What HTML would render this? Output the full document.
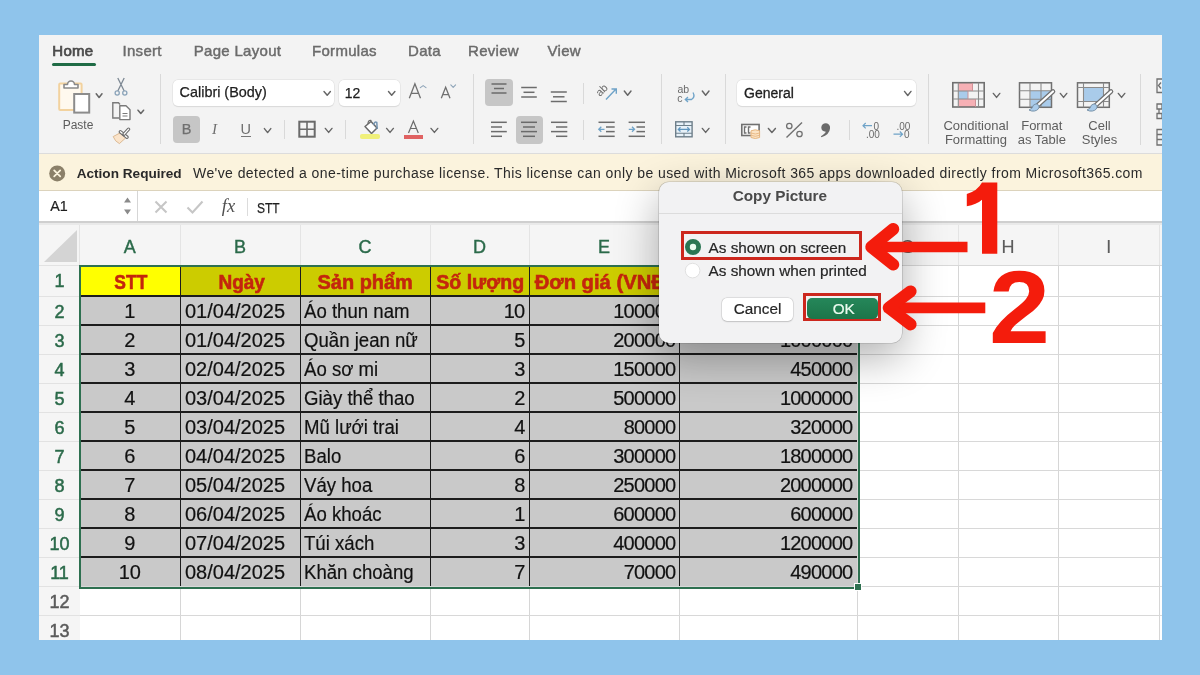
<!DOCTYPE html>
<html><head><meta charset="utf-8">
<style>
html,body{margin:0;padding:0;}
body{width:1200px;height:675px;background:#8FC4EB;position:relative;overflow:hidden;font-family:"Liberation Sans",sans-serif;}
.a{position:absolute;}
#win{position:absolute;left:0;top:0;width:1200px;height:675px;clip-path:inset(35px 38px 35px 39px);will-change:transform;}
.t{position:absolute;white-space:pre;line-height:1;}
.tab{position:absolute;white-space:pre;line-height:1;font-weight:bold;font-size:15px;color:#6A6A6A;top:43px;}
.sep{position:absolute;width:1px;background:#D6D6D6;}
.box{position:absolute;background:#fff;border-radius:5px;box-shadow:0 0 0 0.5px #DEDEDE,0 0.5px 1px rgba(0,0,0,0.12);}
.chev{position:absolute;width:5px;height:5px;border-right:1.6px solid #6A6A6A;border-bottom:1.6px solid #6A6A6A;transform:rotate(45deg);}
.press{position:absolute;background:#C6C6C6;border-radius:4px;}
.cell{position:absolute;font-size:20px;line-height:29px;color:#111;white-space:pre;-webkit-text-stroke:0.2px #111;}
svg{position:absolute;overflow:visible;}
</style></head><body>
<div id="win"><div class="a" style="left:39px;top:35px;width:1123px;height:119px;background:#F3F3F3;"></div>
<div class="a" style="left:39px;top:153px;width:1123px;height:1px;background:#DCDCDC;"></div>
<div class="a" style="left:39px;top:154px;width:1123px;height:37px;background:#FBF3DD;"></div>
<div class="a" style="left:39px;top:190px;width:1123px;height:1px;background:#DCD3BC;"></div>
<div class="a" style="left:39px;top:191px;width:1123px;height:30px;background:#FFFFFF;"></div>
<div class="a" style="left:39px;top:221px;width:1123px;height:2px;background:#CFCFCF;"></div>
<div class="a" style="left:39px;top:223px;width:1123px;height:2px;background:#E9E9E9;"></div>
<div class="t" style="left:52.3px;top:43.00px;font-size:15px;color:#4A4A4A;font-weight:normal;-webkit-text-stroke:0.7px #4A4A4A;letter-spacing:0.3px;">Home</div>
<div class="t" style="left:122.5px;top:43.00px;font-size:15px;color:#6B6B6B;font-weight:normal;-webkit-text-stroke:0.45px #6B6B6B;letter-spacing:0.3px;">Insert</div>
<div class="t" style="left:193.75px;top:43.00px;font-size:15px;color:#6B6B6B;font-weight:normal;-webkit-text-stroke:0.45px #6B6B6B;letter-spacing:0.3px;">Page Layout</div>
<div class="t" style="left:312px;top:43.00px;font-size:15px;color:#6B6B6B;font-weight:normal;-webkit-text-stroke:0.45px #6B6B6B;letter-spacing:0.3px;">Formulas</div>
<div class="t" style="left:408px;top:43.00px;font-size:15px;color:#6B6B6B;font-weight:normal;-webkit-text-stroke:0.45px #6B6B6B;letter-spacing:0.3px;">Data</div>
<div class="t" style="left:468px;top:43.00px;font-size:15px;color:#6B6B6B;font-weight:normal;-webkit-text-stroke:0.45px #6B6B6B;letter-spacing:0.3px;">Review</div>
<div class="t" style="left:547.5px;top:43.00px;font-size:15px;color:#6B6B6B;font-weight:normal;-webkit-text-stroke:0.45px #6B6B6B;letter-spacing:0.3px;">View</div>
<div class="a" style="left:52px;top:63px;width:43.5px;height:3px;background:#1F6B45;border-radius:2px;"></div>
<svg style="left:0;top:0" width="1" height="1"><rect x="59.2" y="83.5" width="22.4" height="26.5" rx="1" fill="#FFF9EE" stroke="#F2D29E" stroke-width="2"/><path d="M64 88 L64 84.5 L67.5 84.5 A3.5 3.5 0 0 1 74.5 84.5 L78 84.5 L78 88 Z" fill="#FFFFFF" stroke="#8A8A8A" stroke-width="1.6" stroke-linejoin="round"/><rect x="74.2" y="94" width="15" height="18.6" fill="#FFFFFF" stroke="#8C8C8C" stroke-width="2"/><path d="M117.8 78 L124.2 91 M124.2 78 L117.8 91" stroke="#7D8893" stroke-width="1.3" fill="none"/><circle cx="117.2" cy="93" r="2.1" fill="none" stroke="#8BA4BA" stroke-width="1.3"/><circle cx="124.8" cy="93" r="2.1" fill="none" stroke="#8BA4BA" stroke-width="1.3"/><path d="M119 118 L112.8 118 L112.8 102.8 L118.5 102.8 L120 104.5" fill="none" stroke="#7A7A7A" stroke-width="1.4"/><path d="M119.8 105.8 L126 105.8 L130 109.8 L130 119.6 L119.8 119.6 Z" fill="#fff" stroke="#7A7A7A" stroke-width="1.4" stroke-linejoin="round"/><path d="M122.5 113.5 L127.5 113.5 M122.5 116 L127.5 116" stroke="#7A7A7A" stroke-width="1"/><path d="M113.2 136.6 L120.6 132.6 L125.8 137.8 L119.4 143.6 Q115 141.5 113.2 136.6 Z" fill="#FBE4CA" stroke="#D8B48C" stroke-width="0.9" stroke-linejoin="round"/><path d="M120.4 131.8 L127 137.2" stroke="#6E6E6E" stroke-width="3.6" stroke-linecap="round"/><path d="M120.4 131.8 L127 137.2" stroke="#FFFFFF" stroke-width="1.3" stroke-linecap="round"/><path d="M123.8 134.4 L128.6 129.2" stroke="#6E6E6E" stroke-width="3.4" stroke-linecap="round"/><path d="M124.2 134 L128.6 129.2" stroke="#FFFFFF" stroke-width="1.2" stroke-linecap="round"/></svg>
<svg style="left:0;top:0" width="1" height="1"><polyline points="96.2,93.8 99.1,97.4 102,93.8" fill="none" stroke="#666" stroke-width="1.53" stroke-linecap="round" stroke-linejoin="round"/></svg>
<svg style="left:0;top:0" width="1" height="1"><polyline points="138,110.2 140.8,113.5 143.6,110.2" fill="none" stroke="#666" stroke-width="1.53" stroke-linecap="round" stroke-linejoin="round"/></svg>
<div class="t" style="left:62.7px;top:119.04px;font-size:12px;color:#5C5C5C;font-weight:normal;">Paste</div>
<div class="a" style="left:159.5px;top:74px;width:1.0px;height:70px;background:#D9D9D9;"></div>
<div class="box" style="left:173px;top:80px;width:161px;height:26px;"></div>
<div class="t" style="left:179.6px;top:85.01px;font-size:14.4px;color:#1E1E1E;font-weight:normal;-webkit-text-stroke:0.25px #1E1E1E;">Calibri (Body)</div>
<svg style="left:0;top:0" width="1" height="1"><polyline points="324,91.5 327.2,95.2 330.4,91.5" fill="none" stroke="#666" stroke-width="1.4449999999999998" stroke-linecap="round" stroke-linejoin="round"/></svg>
<div class="box" style="left:339px;top:80px;width:61px;height:26px;"></div>
<div class="t" style="left:344.7px;top:85.85px;font-size:14px;color:#1E1E1E;font-weight:normal;-webkit-text-stroke:0.25px #1E1E1E;">12</div>
<svg style="left:0;top:0" width="1" height="1"><polyline points="388.5,91.5 391.7,95.2 394.9,91.5" fill="none" stroke="#666" stroke-width="1.4449999999999998" stroke-linecap="round" stroke-linejoin="round"/></svg>
<svg style="left:0;top:0" width="1" height="1"><path d="M409.3 98.3 L414.9 83.8 L420.5 98.3 M411.4 93.4 H418.4 M441.3 98.3 L445.65 87.2 L450 98.3 M442.9 94.6 H448.4" fill="none" stroke="#707070" stroke-width="1.3"/></svg>
<svg style="left:0;top:0" width="1" height="1"><polyline points="420.3,87.6 423.15,85.6 426,87.6" fill="none" stroke="#8EA4B8" stroke-width="1.105" stroke-linecap="round" stroke-linejoin="round"/></svg>
<svg style="left:0;top:0" width="1" height="1"><polyline points="450.8,84.9 453.20000000000005,87.4 455.6,84.9" fill="none" stroke="#8EA4B8" stroke-width="1.105" stroke-linecap="round" stroke-linejoin="round"/></svg>
<div class="press" style="left:172.5px;top:116px;width:27px;height:27px;"></div>
<div class="t" style="left:181.8px;top:122.03px;font-size:14.5px;color:#707070;font-weight:normal;-webkit-text-stroke:0.25px #707070;">B</div>
<div class="t" style="left:212px;top:121.60px;font-size:15px;color:#6E6E6E;font-weight:normal;font-style:italic;font-family:'Liberation Serif',serif;">I</div>
<div class="t" style="left:240.5px;top:122.03px;font-size:14.5px;color:#6E6E6E;font-weight:normal;">U</div>
<div class="a" style="left:240.6px;top:136px;width:10.099999999999994px;height:1.4000000000000057px;background:#777;"></div>
<svg style="left:0;top:0" width="1" height="1"><polyline points="264.4,128.6 267.6,132.6 270.8,128.6" fill="none" stroke="#666" stroke-width="1.4449999999999998" stroke-linecap="round" stroke-linejoin="round"/></svg>
<div class="a" style="left:283.5px;top:120px;width:1.0px;height:19px;background:#D9D9D9;"></div>
<svg style="left:0;top:0" width="1" height="1"><rect x="299.3" y="121.7" width="15.4" height="15" fill="none" stroke="#6A6A6A" stroke-width="2"/><path d="M307 121.7 V136.7 M299.3 129.2 H314.7" stroke="#6A6A6A" stroke-width="1.6"/><path d="M365 126.5 L371 121.5 L377 128 L371.5 133.5 Z" fill="#fff" stroke="#6A6A6A" stroke-width="1.5" stroke-linejoin="round"/><path d="M368 124 Q368 119.5 371.5 120.5" fill="none" stroke="#6A6A6A" stroke-width="1.3"/><path d="M373.5 125 Q374.5 121 376.8 122.5 L377.2 129" fill="none" stroke="#7393B0" stroke-width="1.5"/><path d="M408.5 133 L413.4 121 L418.3 133 M410.3 128.5 H416.5" fill="none" stroke="#6A6A6A" stroke-width="1.2"/></svg>
<div class="a" style="left:359.5px;top:134.3px;width:20.0px;height:5.0px;background:#F0F07A;border-radius:2px;filter:blur(0.6px);"></div>
<div class="a" style="left:404px;top:134.7px;width:18.69999999999999px;height:4.200000000000017px;background:#E06262;"></div>
<svg style="left:0;top:0" width="1" height="1"><polyline points="325.3,128.4 328.65,132.4 332,128.4" fill="none" stroke="#666" stroke-width="1.4449999999999998" stroke-linecap="round" stroke-linejoin="round"/></svg>
<svg style="left:0;top:0" width="1" height="1"><polyline points="386.6,128.4 390.0,132.4 393.4,128.4" fill="none" stroke="#666" stroke-width="1.4449999999999998" stroke-linecap="round" stroke-linejoin="round"/></svg>
<svg style="left:0;top:0" width="1" height="1"><polyline points="431,128.4 434.4,132.4 437.8,128.4" fill="none" stroke="#666" stroke-width="1.4449999999999998" stroke-linecap="round" stroke-linejoin="round"/></svg>
<div class="a" style="left:345.1px;top:120px;width:1.0px;height:19.30000000000001px;background:#D9D9D9;"></div>
<div class="a" style="left:472.8px;top:74px;width:1.0px;height:70px;background:#D9D9D9;"></div>
<div class="press" style="left:485px;top:79px;width:28px;height:27.4px;"></div>
<div class="press" style="left:515.5px;top:116px;width:27.2px;height:27.6px;"></div>
<svg style="left:0;top:0" width="1" height="1"><path d="M491.5 84 H506.5" stroke="#6A6A6A" stroke-width="1.5"/><path d="M494 88.5 H504" stroke="#6A6A6A" stroke-width="1.5"/><path d="M491.5 93 H506.5" stroke="#6A6A6A" stroke-width="1.5"/><path d="M521.2 87.5 H536.8" stroke="#6C6C6C" stroke-width="1.5"/><path d="M523.5 92.3 H534.5" stroke="#6C6C6C" stroke-width="1.5"/><path d="M521.2 97 H536.8" stroke="#6C6C6C" stroke-width="1.5"/><path d="M550.8 92 H566.8" stroke="#6C6C6C" stroke-width="1.5"/><path d="M553 96.8 H564.5" stroke="#6C6C6C" stroke-width="1.5"/><path d="M550.8 101.5 H566.8" stroke="#6C6C6C" stroke-width="1.5"/><path d="M491 122.3 H506.8" stroke="#6C6C6C" stroke-width="1.5"/><path d="M491 127 H502" stroke="#6C6C6C" stroke-width="1.5"/><path d="M491 131.6 H506.8" stroke="#6C6C6C" stroke-width="1.5"/><path d="M491 136.3 H502" stroke="#6C6C6C" stroke-width="1.5"/><path d="M521 122.3 H537" stroke="#6A6A6A" stroke-width="1.5"/><path d="M523 127 H535" stroke="#6A6A6A" stroke-width="1.5"/><path d="M521 131.6 H537" stroke="#6A6A6A" stroke-width="1.5"/><path d="M523 136.3 H535" stroke="#6A6A6A" stroke-width="1.5"/><path d="M551 122.3 H567.3" stroke="#6C6C6C" stroke-width="1.5"/><path d="M556 127 H567.3" stroke="#6C6C6C" stroke-width="1.5"/><path d="M551 131.6 H567.3" stroke="#6C6C6C" stroke-width="1.5"/><path d="M556 136.3 H567.3" stroke="#6C6C6C" stroke-width="1.5"/><text x="0" y="0" transform="translate(600,97) rotate(-45)" font-family="Liberation Sans" font-size="11" fill="#6A6A6A">ab</text><path d="M606 99.5 L616 89 M611.5 89 H616.3 V93.8" fill="none" stroke="#6FA3C8" stroke-width="1.4"/><text x="677.5" y="92.5" font-family="Liberation Sans" font-size="10.5" fill="#6A6A6A">ab</text><text x="677.3" y="101.5" font-family="Liberation Sans" font-size="10.5" fill="#6A6A6A">c</text><path d="M693 92.5 Q695.5 97 691.5 99.5 L685.5 99.5 M688 97 L685.3 99.5 L688 102" fill="none" stroke="#6FA3C8" stroke-width="1.3"/><path d="M598.5 122.3 H614.7" stroke="#6C6C6C" stroke-width="1.5"/><path d="M606 127 H614.7" stroke="#6C6C6C" stroke-width="1.5"/><path d="M606 131.6 H614.7" stroke="#6C6C6C" stroke-width="1.5"/><path d="M598.5 136.3 H614.7" stroke="#6C6C6C" stroke-width="1.5"/><path d="M604.5 129.3 H598.8 M601.3 126.8 L598.8 129.3 L601.3 131.8" fill="none" stroke="#6FA3C8" stroke-width="1.3"/><path d="M628.6 122.3 H645" stroke="#6C6C6C" stroke-width="1.5"/><path d="M636.5 127 H645" stroke="#6C6C6C" stroke-width="1.5"/><path d="M636.5 131.6 H645" stroke="#6C6C6C" stroke-width="1.5"/><path d="M628.6 136.3 H645" stroke="#6C6C6C" stroke-width="1.5"/><path d="M628.8 129.3 H634.5 M632 126.8 L634.5 129.3 L632 131.8" fill="none" stroke="#6FA3C8" stroke-width="1.3"/><rect x="675.7" y="121.8" width="16.4" height="15" fill="#E7F1F8" stroke="#6E7F8A" stroke-width="1.4"/><path d="M675.7 125.5 H692.1 M675.7 133.3 H692.1 M684 121.8 V125.5 M684 133.3 V136.8" stroke="#6E7F8A" stroke-width="1.1"/><path d="M678.3 129.4 H689.5 M680.5 127.3 L678.3 129.4 L680.5 131.5 M687.3 127.3 L689.5 129.4 L687.3 131.5" fill="none" stroke="#5E95BE" stroke-width="1.2"/></svg>
<div class="a" style="left:582.5px;top:83px;width:1.0px;height:21px;background:#D9D9D9;"></div>
<div class="a" style="left:582.5px;top:120px;width:1.0px;height:20px;background:#D9D9D9;"></div>
<svg style="left:0;top:0" width="1" height="1"><polyline points="624.3,91 627.65,95.2 631,91" fill="none" stroke="#666" stroke-width="1.4449999999999998" stroke-linecap="round" stroke-linejoin="round"/></svg>
<svg style="left:0;top:0" width="1" height="1"><polyline points="702.3,91 705.65,95.2 709,91" fill="none" stroke="#666" stroke-width="1.4449999999999998" stroke-linecap="round" stroke-linejoin="round"/></svg>
<svg style="left:0;top:0" width="1" height="1"><polyline points="702.3,128.4 705.65,132.4 709,128.4" fill="none" stroke="#666" stroke-width="1.4449999999999998" stroke-linecap="round" stroke-linejoin="round"/></svg>
<div class="a" style="left:660.5px;top:74px;width:1.0px;height:70px;background:#D9D9D9;"></div>
<div class="a" style="left:724.5px;top:74px;width:1.0px;height:70px;background:#D9D9D9;"></div>
<div class="box" style="left:737.3px;top:80px;width:178.5px;height:26.3px;"></div>
<div class="t" style="left:744px;top:86.15px;font-size:14px;color:#1E1E1E;font-weight:normal;-webkit-text-stroke:0.3px #1E1E1E;">General</div>
<svg style="left:0;top:0" width="1" height="1"><polyline points="904.5,91.4 907.75,95.5 911,91.4" fill="none" stroke="#666" stroke-width="1.4449999999999998" stroke-linecap="round" stroke-linejoin="round"/></svg>
<svg style="left:0;top:0" width="1" height="1"><rect x="741.8" y="124.5" width="17.3" height="11" fill="#fff" stroke="#707070" stroke-width="1.6"/><path d="M746.5 127 H744.5 V133 H746.5 M750.5 127 H748.5 V133 H750.5" fill="none" stroke="#707070" stroke-width="1.4"/><path d="M751 130.8 Q755.3 128.8 759.6 130.8 V137.5 Q755.3 139.5 751 137.5 Z" fill="#FBE3C4" stroke="#E6B680" stroke-width="1"/><path d="M751 133 Q755.3 135 759.6 133 M751 135.3 Q755.3 137.3 759.6 135.3" fill="none" stroke="#E6B680" stroke-width="0.9"/><path d="M786.5 137.5 L802 122.5" stroke="#707070" stroke-width="1.4"/><circle cx="789.3" cy="126" r="2.7" fill="none" stroke="#707070" stroke-width="1.3"/><circle cx="799.5" cy="134" r="2.7" fill="none" stroke="#707070" stroke-width="1.3"/><path d="M821.3 127.6 A4.4 4.4 0 1 1 830 128.5 Q829.6 134.6 821.4 137.3 L820.9 136.2 Q825.2 133.6 825.8 131.7 Q821.3 131.5 821.3 127.6 Z" fill="#6A6A6A"/><text x="873.5" y="129.6" font-family="Liberation Sans" font-size="10" fill="#6A6A6A">0</text><text x="866" y="138" font-family="Liberation Sans" font-size="10" fill="#6A6A6A">.00</text><path d="M872 125.7 H863 M865.7 123 L863 125.7 L865.7 128.4" fill="none" stroke="#6FA3C8" stroke-width="1.2"/><text x="896.5" y="129.6" font-family="Liberation Sans" font-size="10" fill="#6A6A6A">.00</text><text x="904" y="138" font-family="Liberation Sans" font-size="10" fill="#6A6A6A">0</text><path d="M893.5 134.2 H902.5 M899.8 131.5 L902.5 134.2 L899.8 136.9" fill="none" stroke="#6FA3C8" stroke-width="1.2"/></svg>
<svg style="left:0;top:0" width="1" height="1"><polyline points="768.4,128.4 771.9,132.4 775.4,128.4" fill="none" stroke="#666" stroke-width="1.4449999999999998" stroke-linecap="round" stroke-linejoin="round"/></svg>
<div class="a" style="left:848.5px;top:120px;width:1.0px;height:20px;background:#D9D9D9;"></div>
<div class="a" style="left:927.5px;top:74px;width:1.0px;height:70px;background:#D9D9D9;"></div>
<svg style="left:0;top:0" width="1" height="1"><rect x="958.5" y="83" width="14" height="8" fill="#F6B0B5"/><rect x="958.5" y="91" width="9.5" height="8" fill="#A9CBEA"/><rect x="958.5" y="99" width="17" height="8" fill="#F6B0B5"/><rect x="952.8" y="82.7" width="31.40000000000009" height="24.299999999999997" fill="none" stroke="#707070" stroke-width="1.6"/><path d="M958.3 82.7 V107 M978.5 82.7 V107 M952.8 91 H984.2 M952.8 99 H984.2" stroke="#8A8A8A" stroke-width="1.1"/><path d="M972.5 83 V91 M968 91 V99 M975.5 99 V107" stroke="#C98A90" stroke-width="0.9"/><rect x="1030.5" y="91" width="21" height="16.3" fill="#A9CBEA"/><rect x="1019.5" y="82.8" width="32.0" height="24.5" fill="none" stroke="#707070" stroke-width="1.5"/><path d="M1030 82.8 V107.3 M1041 82.8 V107.3 M1019.5 90.8 H1051.5 M1019.5 99.2 H1051.5" stroke="#8A8A8A" stroke-width="1.1"/><path d="M1053 91.5 L1037.5 105.5" stroke="#707070" stroke-width="4.6" stroke-linecap="round"/><path d="M1053 91.5 L1037.5 105.5" stroke="#FFFFFF" stroke-width="2.2" stroke-linecap="round"/><path d="M1029.0 110.0 Q1032.5 109.0 1033.5 105.0 Q1036.0 102.5 1039.0 105.5 Q1039.5 110.0 1034.5 111.0 Q1031.5 111.5 1029.0 110.0 Z" fill="#A9CBEA" stroke="#7A94AA" stroke-width="1"/><rect x="1083.8" y="87.8" width="19.5" height="13.5" fill="#A9CBEA"/><rect x="1077.5" y="82.8" width="31.799999999999955" height="24.5" fill="none" stroke="#707070" stroke-width="1.5"/><path d="M1083.5 82.8 V107.3 M1103.5 82.8 V107.3 M1077.5 87.5 H1109.3 M1077.5 101.5 H1109.3" stroke="#8A8A8A" stroke-width="1.1"/><path d="M1111 91.5 L1095.5 105.5" stroke="#707070" stroke-width="4.6" stroke-linecap="round"/><path d="M1111 91.5 L1095.5 105.5" stroke="#FFFFFF" stroke-width="2.2" stroke-linecap="round"/><path d="M1087.0 110.0 Q1090.5 109.0 1091.5 105.0 Q1094.0 102.5 1097.0 105.5 Q1097.5 110.0 1092.5 111.0 Q1089.5 111.5 1087.0 110.0 Z" fill="#A9CBEA" stroke="#7A94AA" stroke-width="1"/><path d="M1162 79 H1157 V92.5 H1162 M1161 82.5 L1158.5 85.5 L1161 88.5 M1157 104 H1162 V109 H1157 Z M1157 113.5 H1162 V118.5 H1157 Z M1159 109 V113.5 M1162 129.5 H1157 V145 H1162 M1157 134.5 H1162 M1157 139.5 H1162" fill="none" stroke="#707070" stroke-width="1.3"/></svg>
<svg style="left:0;top:0" width="1" height="1"><polyline points="993.3,93.4 996.55,97.4 999.8,93.4" fill="none" stroke="#666" stroke-width="1.4449999999999998" stroke-linecap="round" stroke-linejoin="round"/></svg>
<svg style="left:0;top:0" width="1" height="1"><polyline points="1060.3,93.4 1063.55,97.4 1066.8,93.4" fill="none" stroke="#666" stroke-width="1.4449999999999998" stroke-linecap="round" stroke-linejoin="round"/></svg>
<svg style="left:0;top:0" width="1" height="1"><polyline points="1118.3,93.4 1121.55,97.4 1124.8,93.4" fill="none" stroke="#666" stroke-width="1.4449999999999998" stroke-linecap="round" stroke-linejoin="round"/></svg>
<div class="t" style="left:916px;width:120px;text-align:center;top:119.00px;font-size:13px;color:#5E5E5E;">Conditional</div>
<div class="t" style="left:916px;width:120px;text-align:center;top:133.00px;font-size:13px;color:#5E5E5E;">Formatting</div>
<div class="t" style="left:981.8px;width:120px;text-align:center;top:119.00px;font-size:13px;color:#5E5E5E;">Format</div>
<div class="t" style="left:981.8px;width:120px;text-align:center;top:133.00px;font-size:13px;color:#5E5E5E;">as Table</div>
<div class="t" style="left:1039.5px;width:120px;text-align:center;top:119.00px;font-size:13px;color:#5E5E5E;">Cell</div>
<div class="t" style="left:1039.5px;width:120px;text-align:center;top:133.00px;font-size:13px;color:#5E5E5E;">Styles</div>
<div class="a" style="left:1140.0px;top:74px;width:1.0px;height:71px;background:#D9D9D9;"></div>
<svg style="left:0;top:0" width="1" height="1"><circle cx="57.2" cy="173.4" r="8" fill="#8B8069"/><path d="M54.2 170.4 L60.2 176.4 M60.2 170.4 L54.2 176.4" stroke="#FBF3DD" stroke-width="1.8" stroke-linecap="round"/></svg>
<div class="t" style="left:76.7px;top:166.79px;font-size:13.6px;color:#2A2A2A;font-weight:bold;">Action Required</div>
<div class="t" style="left:193px;top:166.45px;font-size:14px;color:#2A2A2A;font-weight:normal;letter-spacing:0.425px;">We've detected a one-time purchase license. This license can only be used with Microsoft 365 apps downloaded directly from Microsoft365.com</div>
<div class="a" style="left:137px;top:191px;width:1px;height:30px;background:#D6D6D6;"></div>
<div class="t" style="left:50.2px;top:198.60px;font-size:14.3px;color:#1E1E1E;font-weight:normal;-webkit-text-stroke:0.2px #1E1E1E;">A1</div>
<svg style="left:0;top:0" width="1" height="1"><path d="M124 202.5 L127.5 197.5 L131 202.5 Z M124 209.5 L127.5 214.5 L131 209.5 Z" fill="#8A8A8A"/><path d="M155.5 201.5 L166.5 212.5 M166.5 201.5 L155.5 212.5" stroke="#C6C6C6" stroke-width="2.1"/><path d="M187.5 207.5 L192.5 212.5 L202.5 201.5" fill="none" stroke="#C6C6C6" stroke-width="2.1"/></svg>
<div class="t" style="left:221.8px;top:197.14px;font-size:18.5px;color:#505050;font-weight:normal;font-family:'Liberation Serif',serif;font-style:italic;">fx</div>
<div class="a" style="left:247px;top:198px;width:1px;height:18px;background:#DCDCDC;"></div>
<div class="t" style="left:256.5px;top:199.50px;font-size:15px;color:#1E1E1E;font-weight:normal;transform:scaleX(0.8);transform-origin:0 0;-webkit-text-stroke:0.25px #1E1E1E;">STT</div>
<div class="a" style="left:39px;top:225px;width:1123px;height:41px;background:#F5F5F5;"></div>
<div class="a" style="left:39px;top:266px;width:41px;height:380px;background:#F5F5F5;"></div>
<div class="a" style="left:80px;top:266px;width:1082px;height:380px;background:#FFFFFF;"></div>
<svg style="left:0;top:0" width="1200" height="675"><polygon points="44,262 77,262 77,230" fill="#D4D4D4"/></svg>
<div class="a" style="left:79.0px;top:225px;width:1px;height:41px;background:#E4E4E4;"></div>
<div class="a" style="left:179.5px;top:225px;width:1px;height:41px;background:#E4E4E4;"></div>
<div class="a" style="left:299.5px;top:225px;width:1px;height:41px;background:#E4E4E4;"></div>
<div class="a" style="left:429.5px;top:225px;width:1px;height:41px;background:#E4E4E4;"></div>
<div class="a" style="left:528.5px;top:225px;width:1px;height:41px;background:#E4E4E4;"></div>
<div class="a" style="left:678.5px;top:225px;width:1px;height:41px;background:#E4E4E4;"></div>
<div class="a" style="left:856.5px;top:225px;width:1px;height:41px;background:#E4E4E4;"></div>
<div class="a" style="left:957.5px;top:225px;width:1px;height:41px;background:#E4E4E4;"></div>
<div class="a" style="left:1057.5px;top:225px;width:1px;height:41px;background:#E4E4E4;"></div>
<div class="a" style="left:1159.0px;top:225px;width:1px;height:41px;background:#E4E4E4;"></div>
<div class="a" style="left:179.5px;top:266px;width:1px;height:380px;background:#D6D6D6;"></div>
<div class="a" style="left:299.5px;top:266px;width:1px;height:380px;background:#D6D6D6;"></div>
<div class="a" style="left:429.5px;top:266px;width:1px;height:380px;background:#D6D6D6;"></div>
<div class="a" style="left:528.5px;top:266px;width:1px;height:380px;background:#D6D6D6;"></div>
<div class="a" style="left:678.5px;top:266px;width:1px;height:380px;background:#D6D6D6;"></div>
<div class="a" style="left:856.5px;top:266px;width:1px;height:380px;background:#D6D6D6;"></div>
<div class="a" style="left:957.5px;top:266px;width:1px;height:380px;background:#D6D6D6;"></div>
<div class="a" style="left:1057.5px;top:266px;width:1px;height:380px;background:#D6D6D6;"></div>
<div class="a" style="left:1159.0px;top:266px;width:1px;height:380px;background:#D6D6D6;"></div>
<div class="a" style="left:39px;top:264.5px;width:41px;height:1px;background:#E2E2E2;"></div>
<div class="a" style="left:80px;top:264.5px;width:1082px;height:1px;background:#D8D8D8;"></div>
<div class="a" style="left:39px;top:295.5px;width:41px;height:1px;background:#E2E2E2;"></div>
<div class="a" style="left:80px;top:295.5px;width:1082px;height:1px;background:#D8D8D8;"></div>
<div class="a" style="left:39px;top:324.5px;width:41px;height:1px;background:#E2E2E2;"></div>
<div class="a" style="left:80px;top:324.5px;width:1082px;height:1px;background:#D8D8D8;"></div>
<div class="a" style="left:39px;top:353.5px;width:41px;height:1px;background:#E2E2E2;"></div>
<div class="a" style="left:80px;top:353.5px;width:1082px;height:1px;background:#D8D8D8;"></div>
<div class="a" style="left:39px;top:382.5px;width:41px;height:1px;background:#E2E2E2;"></div>
<div class="a" style="left:80px;top:382.5px;width:1082px;height:1px;background:#D8D8D8;"></div>
<div class="a" style="left:39px;top:411.5px;width:41px;height:1px;background:#E2E2E2;"></div>
<div class="a" style="left:80px;top:411.5px;width:1082px;height:1px;background:#D8D8D8;"></div>
<div class="a" style="left:39px;top:440.5px;width:41px;height:1px;background:#E2E2E2;"></div>
<div class="a" style="left:80px;top:440.5px;width:1082px;height:1px;background:#D8D8D8;"></div>
<div class="a" style="left:39px;top:469.5px;width:41px;height:1px;background:#E2E2E2;"></div>
<div class="a" style="left:80px;top:469.5px;width:1082px;height:1px;background:#D8D8D8;"></div>
<div class="a" style="left:39px;top:498.5px;width:41px;height:1px;background:#E2E2E2;"></div>
<div class="a" style="left:80px;top:498.5px;width:1082px;height:1px;background:#D8D8D8;"></div>
<div class="a" style="left:39px;top:527.5px;width:41px;height:1px;background:#E2E2E2;"></div>
<div class="a" style="left:80px;top:527.5px;width:1082px;height:1px;background:#D8D8D8;"></div>
<div class="a" style="left:39px;top:556.5px;width:41px;height:1px;background:#E2E2E2;"></div>
<div class="a" style="left:80px;top:556.5px;width:1082px;height:1px;background:#D8D8D8;"></div>
<div class="a" style="left:39px;top:585.5px;width:41px;height:1px;background:#E2E2E2;"></div>
<div class="a" style="left:80px;top:585.5px;width:1082px;height:1px;background:#D8D8D8;"></div>
<div class="a" style="left:39px;top:614.5px;width:41px;height:1px;background:#E2E2E2;"></div>
<div class="a" style="left:80px;top:614.5px;width:1082px;height:1px;background:#D8D8D8;"></div>
<div class="a" style="left:39px;top:643.5px;width:41px;height:1px;background:#E2E2E2;"></div>
<div class="a" style="left:80px;top:643.5px;width:1082px;height:1px;background:#D8D8D8;"></div>
<div class="t" style="left:79.75px;width:100px;text-align:center;top:238px;font-size:18px;color:#2B6A4A;-webkit-text-stroke:0.4px #2B6A4A;">A</div>
<div class="t" style="left:190.0px;width:100px;text-align:center;top:238px;font-size:18px;color:#2B6A4A;-webkit-text-stroke:0.4px #2B6A4A;">B</div>
<div class="t" style="left:315.0px;width:100px;text-align:center;top:238px;font-size:18px;color:#2B6A4A;-webkit-text-stroke:0.4px #2B6A4A;">C</div>
<div class="t" style="left:429.5px;width:100px;text-align:center;top:238px;font-size:18px;color:#2B6A4A;-webkit-text-stroke:0.4px #2B6A4A;">D</div>
<div class="t" style="left:554.0px;width:100px;text-align:center;top:238px;font-size:18px;color:#2B6A4A;-webkit-text-stroke:0.4px #2B6A4A;">E</div>
<div class="t" style="left:718.0px;width:100px;text-align:center;top:238px;font-size:18px;color:#2B6A4A;-webkit-text-stroke:0.4px #2B6A4A;">F</div>
<div class="t" style="left:857.5px;width:100px;text-align:center;top:238px;font-size:18px;color:#5C5C5C;-webkit-text-stroke:0.1px #5C5C5C;">G</div>
<div class="t" style="left:958.0px;width:100px;text-align:center;top:238px;font-size:18px;color:#5C5C5C;-webkit-text-stroke:0.1px #5C5C5C;">H</div>
<div class="t" style="left:1058.75px;width:100px;text-align:center;top:238px;font-size:18px;color:#5C5C5C;-webkit-text-stroke:0.1px #5C5C5C;">I</div>
<div class="t" style="left:39px;width:41px;text-align:center;top:272.2px;font-size:18px;color:#2B6A4A;-webkit-text-stroke:0.5px #2B6A4A;">1</div>
<div class="t" style="left:39px;width:41px;text-align:center;top:303.2px;font-size:18px;color:#2B6A4A;-webkit-text-stroke:0.5px #2B6A4A;">2</div>
<div class="t" style="left:39px;width:41px;text-align:center;top:332.2px;font-size:18px;color:#2B6A4A;-webkit-text-stroke:0.5px #2B6A4A;">3</div>
<div class="t" style="left:39px;width:41px;text-align:center;top:361.2px;font-size:18px;color:#2B6A4A;-webkit-text-stroke:0.5px #2B6A4A;">4</div>
<div class="t" style="left:39px;width:41px;text-align:center;top:390.2px;font-size:18px;color:#2B6A4A;-webkit-text-stroke:0.5px #2B6A4A;">5</div>
<div class="t" style="left:39px;width:41px;text-align:center;top:419.2px;font-size:18px;color:#2B6A4A;-webkit-text-stroke:0.5px #2B6A4A;">6</div>
<div class="t" style="left:39px;width:41px;text-align:center;top:448.2px;font-size:18px;color:#2B6A4A;-webkit-text-stroke:0.5px #2B6A4A;">7</div>
<div class="t" style="left:39px;width:41px;text-align:center;top:477.2px;font-size:18px;color:#2B6A4A;-webkit-text-stroke:0.5px #2B6A4A;">8</div>
<div class="t" style="left:39px;width:41px;text-align:center;top:506.2px;font-size:18px;color:#2B6A4A;-webkit-text-stroke:0.5px #2B6A4A;">9</div>
<div class="t" style="left:39px;width:41px;text-align:center;top:535.2px;font-size:18px;color:#2B6A4A;-webkit-text-stroke:0.5px #2B6A4A;">10</div>
<div class="t" style="left:39px;width:41px;text-align:center;top:564.2px;font-size:18px;color:#2B6A4A;-webkit-text-stroke:0.5px #2B6A4A;">11</div>
<div class="t" style="left:39px;width:41px;text-align:center;top:593.2px;font-size:18px;color:#5A5A5A;-webkit-text-stroke:0.5px #5A5A5A;">12</div>
<div class="t" style="left:39px;width:41px;text-align:center;top:622.2px;font-size:18px;color:#5A5A5A;-webkit-text-stroke:0.5px #5A5A5A;">13</div>
<div class="a" style="left:80px;top:266px;width:777px;height:320px;background:#C9C9C9;"></div>
<div class="a" style="left:80px;top:266px;width:100px;height:30px;background:#FFFF00;"></div>
<div class="a" style="left:180px;top:266px;width:677px;height:30px;background:#CCCC00;"></div>
<div class="a" style="left:80px;top:295.4px;width:777px;height:1.3px;background:#1C1C1C;"></div>
<div class="a" style="left:80px;top:324.4px;width:777px;height:1.3px;background:#1C1C1C;"></div>
<div class="a" style="left:80px;top:353.4px;width:777px;height:1.3px;background:#1C1C1C;"></div>
<div class="a" style="left:80px;top:382.4px;width:777px;height:1.3px;background:#1C1C1C;"></div>
<div class="a" style="left:80px;top:411.4px;width:777px;height:1.3px;background:#1C1C1C;"></div>
<div class="a" style="left:80px;top:440.4px;width:777px;height:1.3px;background:#1C1C1C;"></div>
<div class="a" style="left:80px;top:469.4px;width:777px;height:1.3px;background:#1C1C1C;"></div>
<div class="a" style="left:80px;top:498.4px;width:777px;height:1.3px;background:#1C1C1C;"></div>
<div class="a" style="left:80px;top:527.4px;width:777px;height:1.3px;background:#1C1C1C;"></div>
<div class="a" style="left:80px;top:556.4px;width:777px;height:1.3px;background:#1C1C1C;"></div>
<div class="a" style="left:179.85px;top:266px;width:1.3px;height:320px;background:#1C1C1C;"></div>
<div class="a" style="left:299.85px;top:266px;width:1.3px;height:320px;background:#1C1C1C;"></div>
<div class="a" style="left:429.85px;top:266px;width:1.3px;height:320px;background:#1C1C1C;"></div>
<div class="a" style="left:528.85px;top:266px;width:1.3px;height:320px;background:#1C1C1C;"></div>
<div class="a" style="left:678.85px;top:266px;width:1.3px;height:320px;background:#1C1C1C;"></div>
<div class="a" style="left:78.5px;top:264.5px;width:777px;height:320px;border:2px solid #2E7050;"></div>
<div class="a" style="left:853.5px;top:582.5px;width:6px;height:6px;background:#2E7050;border:1px solid #fff;"></div>
<div class="cell" style="left:31px;width:200px;text-align:center;top:266.5px;font-size:21px;font-weight:bold;color:#C4250D;-webkit-text-stroke:0.6px #C4250D;"><span style="display:inline-block;transform:scaleX(0.83);">STT</span></div>
<div class="cell" style="left:142px;width:200px;text-align:center;top:266.5px;font-size:21px;font-weight:bold;color:#C4250D;-webkit-text-stroke:0.6px #C4250D;"><span style="display:inline-block;transform:scaleX(0.906);">Ngày</span></div>
<div class="cell" style="left:265px;width:200px;text-align:center;top:266.5px;font-size:21px;font-weight:bold;color:#C4250D;-webkit-text-stroke:0.6px #C4250D;"><span style="display:inline-block;transform:scaleX(0.95);">Sản phẩm</span></div>
<div class="cell" style="left:380px;width:200px;text-align:center;top:266.5px;font-size:21px;font-weight:bold;color:#C4250D;-webkit-text-stroke:0.6px #C4250D;"><span style="display:inline-block;transform:scaleX(0.933);">Số lượng</span></div>
<div class="cell" style="left:504px;width:200px;text-align:center;top:266.5px;font-size:21px;font-weight:bold;color:#C4250D;-webkit-text-stroke:0.6px #C4250D;"><span style="display:inline-block;transform:scaleX(0.963);">Đơn giá (VNĐ)</span></div>
<div class="cell" style="left:668px;width:200px;text-align:center;top:266.5px;font-size:21px;font-weight:bold;color:#C4250D;-webkit-text-stroke:0.6px #C4250D;"><span style="display:inline-block;transform:scaleX(0.95);">Thành tiền</span></div>
<div class="cell" style="left:79.5px;width:100.5px;text-align:center;top:297px;">1</div>
<div class="cell" style="left:185px;top:297px;">01/04/2025</div>
<div class="cell" style="left:304px;top:297px;transform:scaleX(0.93);transform-origin:0 0;">Áo thun nam</div>
<div class="cell" style="left:430px;width:94.5px;text-align:right;top:297px;letter-spacing:-0.75px;">10</div>
<div class="cell" style="left:529px;width:146.5px;text-align:right;top:297px;letter-spacing:-0.75px;">100000</div>
<div class="cell" style="left:679px;width:173.5px;text-align:right;top:297px;letter-spacing:-0.75px;">1000000</div>
<div class="cell" style="left:79.5px;width:100.5px;text-align:center;top:326px;">2</div>
<div class="cell" style="left:185px;top:326px;">01/04/2025</div>
<div class="cell" style="left:304px;top:326px;transform:scaleX(0.93);transform-origin:0 0;">Quần jean nữ</div>
<div class="cell" style="left:430px;width:94.5px;text-align:right;top:326px;letter-spacing:-0.75px;">5</div>
<div class="cell" style="left:529px;width:146.5px;text-align:right;top:326px;letter-spacing:-0.75px;">200000</div>
<div class="cell" style="left:679px;width:173.5px;text-align:right;top:326px;letter-spacing:-0.75px;">1000000</div>
<div class="cell" style="left:79.5px;width:100.5px;text-align:center;top:355px;">3</div>
<div class="cell" style="left:185px;top:355px;">02/04/2025</div>
<div class="cell" style="left:304px;top:355px;transform:scaleX(0.93);transform-origin:0 0;">Áo sơ mi</div>
<div class="cell" style="left:430px;width:94.5px;text-align:right;top:355px;letter-spacing:-0.75px;">3</div>
<div class="cell" style="left:529px;width:146.5px;text-align:right;top:355px;letter-spacing:-0.75px;">150000</div>
<div class="cell" style="left:679px;width:173.5px;text-align:right;top:355px;letter-spacing:-0.75px;">450000</div>
<div class="cell" style="left:79.5px;width:100.5px;text-align:center;top:384px;">4</div>
<div class="cell" style="left:185px;top:384px;">03/04/2025</div>
<div class="cell" style="left:304px;top:384px;transform:scaleX(0.93);transform-origin:0 0;">Giày thể thao</div>
<div class="cell" style="left:430px;width:94.5px;text-align:right;top:384px;letter-spacing:-0.75px;">2</div>
<div class="cell" style="left:529px;width:146.5px;text-align:right;top:384px;letter-spacing:-0.75px;">500000</div>
<div class="cell" style="left:679px;width:173.5px;text-align:right;top:384px;letter-spacing:-0.75px;">1000000</div>
<div class="cell" style="left:79.5px;width:100.5px;text-align:center;top:413px;">5</div>
<div class="cell" style="left:185px;top:413px;">03/04/2025</div>
<div class="cell" style="left:304px;top:413px;transform:scaleX(0.93);transform-origin:0 0;">Mũ lưới trai</div>
<div class="cell" style="left:430px;width:94.5px;text-align:right;top:413px;letter-spacing:-0.75px;">4</div>
<div class="cell" style="left:529px;width:146.5px;text-align:right;top:413px;letter-spacing:-0.75px;">80000</div>
<div class="cell" style="left:679px;width:173.5px;text-align:right;top:413px;letter-spacing:-0.75px;">320000</div>
<div class="cell" style="left:79.5px;width:100.5px;text-align:center;top:442px;">6</div>
<div class="cell" style="left:185px;top:442px;">04/04/2025</div>
<div class="cell" style="left:304px;top:442px;transform:scaleX(0.93);transform-origin:0 0;">Balo</div>
<div class="cell" style="left:430px;width:94.5px;text-align:right;top:442px;letter-spacing:-0.75px;">6</div>
<div class="cell" style="left:529px;width:146.5px;text-align:right;top:442px;letter-spacing:-0.75px;">300000</div>
<div class="cell" style="left:679px;width:173.5px;text-align:right;top:442px;letter-spacing:-0.75px;">1800000</div>
<div class="cell" style="left:79.5px;width:100.5px;text-align:center;top:471px;">7</div>
<div class="cell" style="left:185px;top:471px;">05/04/2025</div>
<div class="cell" style="left:304px;top:471px;transform:scaleX(0.93);transform-origin:0 0;">Váy hoa</div>
<div class="cell" style="left:430px;width:94.5px;text-align:right;top:471px;letter-spacing:-0.75px;">8</div>
<div class="cell" style="left:529px;width:146.5px;text-align:right;top:471px;letter-spacing:-0.75px;">250000</div>
<div class="cell" style="left:679px;width:173.5px;text-align:right;top:471px;letter-spacing:-0.75px;">2000000</div>
<div class="cell" style="left:79.5px;width:100.5px;text-align:center;top:500px;">8</div>
<div class="cell" style="left:185px;top:500px;">06/04/2025</div>
<div class="cell" style="left:304px;top:500px;transform:scaleX(0.93);transform-origin:0 0;">Áo khoác</div>
<div class="cell" style="left:430px;width:94.5px;text-align:right;top:500px;letter-spacing:-0.75px;">1</div>
<div class="cell" style="left:529px;width:146.5px;text-align:right;top:500px;letter-spacing:-0.75px;">600000</div>
<div class="cell" style="left:679px;width:173.5px;text-align:right;top:500px;letter-spacing:-0.75px;">600000</div>
<div class="cell" style="left:79.5px;width:100.5px;text-align:center;top:529px;">9</div>
<div class="cell" style="left:185px;top:529px;">07/04/2025</div>
<div class="cell" style="left:304px;top:529px;transform:scaleX(0.93);transform-origin:0 0;">Túi xách</div>
<div class="cell" style="left:430px;width:94.5px;text-align:right;top:529px;letter-spacing:-0.75px;">3</div>
<div class="cell" style="left:529px;width:146.5px;text-align:right;top:529px;letter-spacing:-0.75px;">400000</div>
<div class="cell" style="left:679px;width:173.5px;text-align:right;top:529px;letter-spacing:-0.75px;">1200000</div>
<div class="cell" style="left:79.5px;width:100.5px;text-align:center;top:558px;">10</div>
<div class="cell" style="left:185px;top:558px;">08/04/2025</div>
<div class="cell" style="left:304px;top:558px;transform:scaleX(0.93);transform-origin:0 0;">Khăn choàng</div>
<div class="cell" style="left:430px;width:94.5px;text-align:right;top:558px;letter-spacing:-0.75px;">7</div>
<div class="cell" style="left:529px;width:146.5px;text-align:right;top:558px;letter-spacing:-0.75px;">70000</div>
<div class="cell" style="left:679px;width:173.5px;text-align:right;top:558px;letter-spacing:-0.75px;">490000</div>
<div class="a" style="left:659px;top:182px;width:243px;height:161px;background:#F2F2F3;border-radius:10px;box-shadow:0 0 0 0.6px rgba(0,0,0,0.2),0 14px 44px rgba(0,0,0,0.32);"></div>
<div class="t" style="left:732.7px;top:187.75px;font-size:15.3px;color:#4A4A4A;font-weight:bold;">Copy Picture</div>
<div class="a" style="left:659px;top:212.5px;width:243px;height:1px;background:#DCDCDC;"></div>
<div class="a" style="left:680.5px;top:231.2px;width:175.5px;height:22.5px;border:3.6px solid #CC271D;"></div>
<svg style="left:0;top:0" width="1" height="1"><circle cx="693" cy="247" r="5.6" fill="#EAFBF0" stroke="#2A7653" stroke-width="4.8"/><circle cx="692.6" cy="270.6" r="7.3" fill="#FFFFFF" stroke="#D9D9D9" stroke-width="0.8"/></svg>
<div class="t" style="left:708.6px;top:239.65px;font-size:15.3px;color:#262626;font-weight:normal;-webkit-text-stroke:0.2px #262626;">As shown on screen</div>
<div class="t" style="left:708.6px;top:262.85px;font-size:15.3px;color:#262626;font-weight:normal;-webkit-text-stroke:0.2px #262626;">As shown when printed</div>
<div class="a" style="left:721.8px;top:297.8px;width:71.2px;height:23.2px;background:#FFFFFF;border-radius:5px;box-shadow:0 0 0 0.6px rgba(0,0,0,0.12),0 0.8px 1.5px rgba(0,0,0,0.15);"></div>
<div class="t" style="left:733.8px;top:300.55px;font-size:15.3px;color:#262626;font-weight:normal;-webkit-text-stroke:0.2px #262626;">Cancel</div>
<div class="a" style="left:803.2px;top:293.2px;width:71.8px;height:22.2px;border:3.6px solid #CC271D;"></div>
<div class="a" style="left:807.2px;top:297.8px;width:71.3px;height:21.7px;background:linear-gradient(#25875A,#1C7549);border-radius:5px;"></div>
<div class="t" style="left:832.7px;top:300.55px;font-size:15.3px;color:#EAFBEF;font-weight:normal;-webkit-text-stroke:0.2px #EAFBEF;">OK</div>
<svg style="left:0;top:0" width="1" height="1"><path d="M875 247 H967.5" stroke="#F41C0C" stroke-width="10.6"/><polyline points="893.3,229 871.3,247 893.3,264.6" fill="none" stroke="#F41C0C" stroke-width="12" stroke-linecap="round" stroke-linejoin="round"/><path d="M892 307.9 H985.3" stroke="#F41C0C" stroke-width="10.6"/><polyline points="910.6,291.4 888.7,307.8 910.6,324.4" fill="none" stroke="#F41C0C" stroke-width="12" stroke-linecap="round" stroke-linejoin="round"/><path d="M982 182.6 H997.3 V253.8 H982 V199.8 Q976.5 204.8 966.8 206.2 V194 Q977.5 191 982 182.6 Z" fill="#F41C0C"/></svg>
<div class="t" id="n2" style="left:989px;top:254.5px;font-size:104px;font-weight:bold;color:#F41C0C;transform:scaleX(1.055);transform-origin:0 0;">2</div>
</div>
</body></html>
